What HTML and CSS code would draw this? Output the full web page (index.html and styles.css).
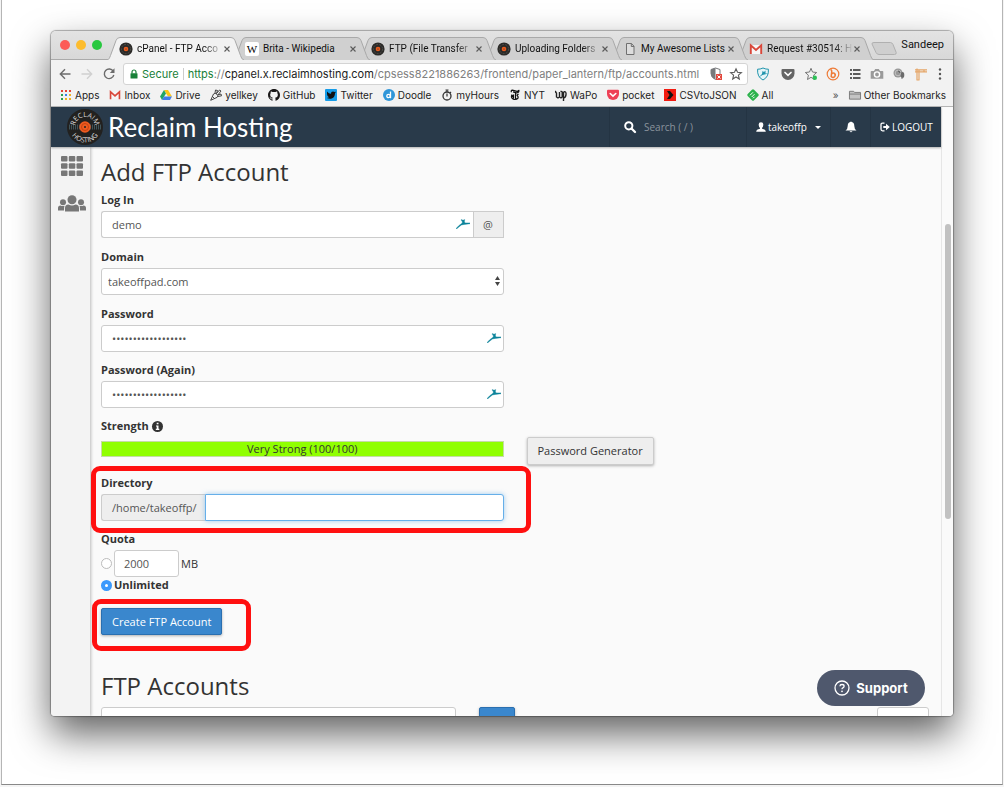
FILE: index.html
```html
<!DOCTYPE html>
<html lang="en">
<head>
<meta charset="utf-8">
<title>cPanel - FTP Accounts</title>
<link rel="stylesheet" href="styles.css">
</head>
<body>
<svg class="defs" aria-hidden="true">
  <symbol id="record" viewBox="0 0 14 14"><circle cx="7" cy="7" r="6.6" fill="#2b2a28"/><circle cx="7" cy="7" r="4.6" fill="none" stroke="#5c5a55" stroke-width=".7" stroke-dasharray="2 1.2"/><circle cx="7" cy="7" r="2.3" fill="#ea5b1d"/><circle cx="7" cy="7" r=".6" fill="#2b2a28"/></symbol>
  <symbol id="gmail" viewBox="0 0 14 14"><path d="M2 3h10v9H2z" fill="#f6f6f6"/><path d="M1.8 12V3.4L7 8l5.200-4.600V12" fill="none" stroke="#d9473a" stroke-width="1.900"/></symbol>
  <symbol id="close" viewBox="0 0 8 8"><path d="M1.500 1.500l5 5M6.500 1.500l-5 5" stroke="#5b5b5b" stroke-width="1.100"/></symbol>
  <symbol id="tab" viewBox="0 0 137 23" preserveAspectRatio="none"><path d="M0 23C2 22.500 2.500 21 3.500 18.500L9 3.500Q10 .5 13 .5H124Q127 .5 128 3.500l5.500 15Q134.500 22.500 137 23" stroke="#a9a9a9" stroke-width="1"/></symbol>
  <symbol id="impala" viewBox="0 0 14 10"><path d="M0 9.600 3 6.500 6 4.300 6.500 3 5.300 1.300 5.300.5 7 1.300 8.700.6 8.400 2.600 9 3.900H14V4.700L8.500 5.400 5.500 5.900 3.200 7.800.5 10z" fill="#0c849b" stroke="#0c849b" stroke-width=".4"/></symbol>
</svg>
<main class="frame">
<section class="browser">
  <header class="tabstrip">
    <div class="lights"><i class="red"></i><i class="yellow"></i><i class="green"></i></div>
    <nav class="tabs">
      <div class="tab active"><svg class="shape"><use href="#tab"/></svg><svg class="fav"><use href="#record"/></svg><span class="title">cPanel - FTP Acco</span><button class="close" aria-label="Close tab"><svg><use href="#close"/></svg></button></div>
      <div class="tab t2"><svg class="shape"><use href="#tab"/></svg><svg class="fav" viewBox="0 0 14 14"><rect width="14" height="14" rx="2" fill="#fff"/><text x="7" y="11" text-anchor="middle" class="wiki">W</text></svg><span class="title">Brita - Wikipedia</span><button class="close" aria-label="Close tab"><svg><use href="#close"/></svg></button></div>
      <div class="tab t3"><svg class="shape"><use href="#tab"/></svg><svg class="fav"><use href="#record"/></svg><span class="title">FTP (File Transfer</span><button class="close" aria-label="Close tab"><svg><use href="#close"/></svg></button></div>
      <div class="tab t4"><svg class="shape"><use href="#tab"/></svg><svg class="fav"><use href="#record"/></svg><span class="title">Uploading Folders</span><button class="close" aria-label="Close tab"><svg><use href="#close"/></svg></button></div>
      <div class="tab t5"><svg class="shape"><use href="#tab"/></svg><svg class="fav" viewBox="0 0 14 14"><path d="M3.500 1.500H8.500L11 4.200V12.500H3.500zM8.300 1.500V4.500H11" fill="#ddd" stroke="#707070"/></svg><span class="title">My Awesome Lists</span><button class="close" aria-label="Close tab"><svg><use href="#close"/></svg></button></div>
      <div class="tab t6"><svg class="shape"><use href="#tab"/></svg><svg class="fav"><use href="#gmail"/></svg><span class="title">Request #30514: H</span><button class="close" aria-label="Close tab"><svg><use href="#close"/></svg></button></div>
    </nav>
    <button class="newtab" aria-label="New tab"><svg viewBox="0 0 26 13"><path d="M3 .5H19.500Q21 .5 22 2.500L25.200 10.500Q25.500 12.500 23.500 12.500H8Q6 12.500 5 10.500L1 2Q.6.5 3 .5z" fill="#cfcfcf" stroke="#b0b0b0"/></svg></button>
    <span class="profile">Sandeep</span>
  </header>

  <div class="toolbar">
    <div class="navs">
      <button aria-label="Back"><svg viewBox="0 0 14 14"><path d="M12.500 7H2.500M7 2.300 2.300 7 7 11.700" fill="none" stroke="#6b6b6b" stroke-width="1.400"/></svg></button>
      <button aria-label="Forward"><svg viewBox="0 0 14 14"><path d="M1.500 7H11.500M7 2.300 11.700 7 7 11.700" fill="none" stroke="#d0d0d0" stroke-width="1.400"/></svg></button>
      <button aria-label="Reload"><svg viewBox="0 0 14 14"><path d="M11.200 4.200A4.800 4.800 0 1 0 11.800 8" fill="none" stroke="#6b6b6b" stroke-width="1.400"/><path d="M12.500 1.300V6H7.800z" fill="#6b6b6b"/></svg></button>
    </div>
    <div class="omnibox">
      <svg class="lock" viewBox="0 0 10 10"><path d="M3 4.500V3a2 2 0 0 1 4 0v1.500" fill="none" stroke="#188038" stroke-width="1.200"/><rect x="1.500" y="4.200" width="7" height="5.300" rx=".5" fill="#188038"/></svg>
      <span class="secure">Secure</span>
      <span class="url" role="textbox" aria-label="Address"><span class="scheme">https</span>://<span class="host">cpanel.x.reclaimhosting.com</span>/cpsess8221886263/frontend/paper_lantern/ftp/accounts.html</span>
      <svg class="oi" viewBox="0 0 14 14"><path d="M6.500 1 11 2.500V7Q10.500 10.500 6.500 12.500 2 10.500 2 6.500V2.500z" fill="#fff" stroke="#77797b"/><path d="M6.500 1V12.500Q2 10.500 2 6.500V2.500z" fill="#77797b"/><rect x="7" y="7" width="6" height="6" fill="#e2483d"/><path d="M8.500 8.500l3 3M11.500 8.500l-3 3" stroke="#fff"/></svg>
      <svg class="oi" viewBox="0 0 14 14"><path d="M7 1.800 8.500 5.300 12.400 5.700 9.400 8.200 10.300 12 7 10 3.700 12 4.600 8.200 1.600 5.700 5.500 5.300z" fill="none" stroke="#5c5c5c" stroke-width="1.100"/></svg>
    </div>
    <div class="exts">
      <svg class="w18" viewBox="0 0 14 14"><path d="M7 1Q4 2.400 1.600 2.200 1 10 7 13 13 10 12.400 2.200 10 2.400 7 1z" fill="#e5f5f8" stroke="#2094ac"/><path d="M2.500 10.500 6 7 6.500 4 8 5 9.500 3.500V6.500H12.500L6.500 8z" fill="#2094ac"/></svg>
      <svg class="w16" viewBox="0 0 14 14"><path d="M1.500 2H12.500Q13.500 2 13.500 3V6.500A6.500 6.500 0 0 1 .5 6.500V3Q.5 2 1.500 2z" fill="#656565"/><path d="M4 5.500 7 8.300 10 5.500" fill="none" stroke="#fff" stroke-width="1.700" stroke-linecap="round"/></svg>
      <svg viewBox="0 0 14 14"><path d="M7 1.300 8.500 5 12.700 5.500 9.600 8.200 10.500 12.500 7 10.300 3.500 12.500 4.400 8.200 1.300 5.500 5.500 5z" fill="none" stroke="#777"/><circle cx="10.800" cy="10.800" r="2.200" fill="#2cc157"/></svg>
      <svg viewBox="0 0 14 14"><circle cx="7" cy="7" r="5.800" fill="none" stroke="#ee7b37" stroke-width="1.200"/><path d="M4.500 2.800Q6 3 5.700 5L5.200 9.500Q7 11.400 8.700 9.500 10 7.500 8.300 6.300 6.500 5.500 5.500 7.200" fill="none" stroke="#ee7b37" stroke-width="1.500"/></svg>
      <svg viewBox="0 0 14 14"><path d="M2 3h2M2 7h2M2 11h2M5 3h7.500M5 7h7.500M5 11h7.500" stroke="#5c5c5c" stroke-width="1.800"/></svg>
      <svg viewBox="0 0 14 14"><path d="M1.500 4H4L5.200 2h3.600L10 4h2.500q.8 0 .8.800v7H.7v-7Q.7 4 1.500 4z" fill="#9a9a9a"/><circle cx="7" cy="7.500" r="2.600" fill="none" stroke="#fff" stroke-width="1.400"/></svg>
      <svg viewBox="0 0 14 14"><circle cx="6" cy="6" r="4.500" fill="#979797"/><circle cx="6" cy="6" r="2.800" fill="none" stroke="#ccc" stroke-width=".8"/><path d="M6 4a2 2 0 0 1 2 2" stroke="#555" fill="none"/><ellipse cx="10.500" cy="8" rx="1.800" ry="3" fill="#6b6b6b"/><path d="M10 10v2" stroke="#777"/></svg>
      <svg viewBox="0 0 14 14"><path d="M1 2.800H13M1 4.800H13M3 1.500V13M5 2.800V13M2.500 13H5.500M10 3V5.500" stroke="#e5a567" stroke-width="1.200"/></svg>
      <svg class="w8" viewBox="0 0 8 14"><g fill="#555"><circle cx="4" cy="2.500" r="1.200"/><circle cx="4" cy="7" r="1.200"/><circle cx="4" cy="11.500" r="1.200"/></g></svg>
    </div>
  </div>

  <nav class="bookmarks">
    <a href="#"><svg viewBox="0 0 12 12"><g fill="#e44437"><path d="M1 1h2v2H1zM5 1h2v2H5zM9 1h2v2H9z"/></g><path d="M1 5h2v2H1z" fill="#2e9e54"/><path d="M5 5h2v2H5z" fill="#3d7fe8"/><path d="M9 5h2v2H9zM5 9h2v2H5zM9 9h2v2H9z" fill="#eeb325"/><path d="M1 9h2v2H1z" fill="#2e9e54"/></svg>Apps</a>
    <a href="#"><svg><use href="#gmail"/></svg>Inbox</a>
    <a href="#"><svg viewBox="0 0 12 12"><path d="M4 1H8L12 7.500H8z" fill="#fbc617"/><path d="M4 1 0 7.500 2 11 6 4.500z" fill="#21a465"/><path d="M2 11H10L12 7.500H4z" fill="#427ee8"/></svg>Drive</a>
    <a href="#"><svg viewBox="0 0 12 12"><path d="M.7 11.300 3.500 5Q5 3.500 7 5.200 8.700 7 7.200 8.300zM2.500 7.500 4.500 9.500M5 4l.5-3 2 .5L6.500 4.500 9.500 1l1.500 1L8 5.800 11 5l.5 1.800L8 7.500" fill="none" stroke="#333" stroke-width=".9"/></svg>yellkey</a>
    <a href="#"><svg viewBox="0 0 16 16"><path fill="#191717" d="M8 0C3.580 0 0 3.580 0 8c0 3.540 2.290 6.530 5.470 7.590.4.070.55-.17.55-.38v-1.490c-2.230.48-2.700-.94-2.700-.94-.36-.92-.89-1.170-.89-1.170-.73-.5.060-.49.060-.49.800.060 1.230.83 1.230.83.720 1.230 1.870.87 2.330.67.070-.52.280-.87.500-1.070-1.770-.2-3.640-.89-3.640-3.950 0-.88.310-1.590.82-2.150-.08-.2-.36-1.020.08-2.120 0 0 .67-.22 2.200.82a7.600 7.600 0 0 1 4 0c1.530-1.040 2.200-.82 2.200-.82.440 1.100.16 1.920.08 2.120.51.560.82 1.270.82 2.150 0 3.070-1.870 3.750-3.650 3.950.29.250.54.730.54 1.480v2.200c0 .21.150.46.550.38A8 8 0 0 0 16 8c0-4.420-3.580-8-8-8z"/></svg>GitHub</a>
    <a href="#"><svg viewBox="0 0 12 12"><rect width="12" height="12" rx="1" fill="#169ce8"/><path d="M2 2.500Q4 5 6 4.800 5.800 2.500 8 2.500 9 2.500 9.500 3L11 2.800 10 4.300Q10 9 6 9.700 4 10 1.800 9L4 8.200 2.500 7 2 5z" fill="#111"/></svg>Twitter</a>
    <a href="#"><svg viewBox="0 0 12 12"><circle cx="6" cy="6" r="6" fill="#2f96d9"/><circle cx="5.500" cy="7" r="1.700" fill="none" stroke="#fff" stroke-width="1.300"/><path d="M7.500 2.500v6.700" stroke="#fff" stroke-width="1.300"/></svg>Doodle</a>
    <a href="#"><svg viewBox="0 0 12 12"><circle cx="6" cy="7" r="4" fill="none" stroke="#333" stroke-width="1.300"/><path d="M4.500 1h3M6 1v2M6 4.500V7.500M9 3l1 1" stroke="#333" stroke-width="1.200"/></svg>myHours</a>
    <a href="#"><svg viewBox="0 0 12 12"><path d="M2.500 3.200Q1.500 1.500 3.500 1.200L8 2.400Q9.500 2.400 9.800 1M9.800 1Q10.500 4 7.500 3.800L4 2.800M6.500 4v6M3 5.500Q1.500 8.500 4 10 7 11.500 9.500 8.500M9.500 5 8 6.200 9.500 8.500M4.500 5.500V8.500L3 6" fill="none" stroke="#111" stroke-width="1.200"/></svg>NYT</a>
    <a href="#"><svg viewBox="0 0 12 12"><path d="M1 2Q0 3 1.500 4V8L3 9 4.500 8V3M4.500 8 6 9 7.200 8V3L5.500 2M8.500 3V12M8.500 3Q11.500 2 11 5.500 11 8.500 8.500 9" fill="none" stroke="#222" stroke-width="1.400"/></svg>WaPo</a>
    <a href="#"><svg viewBox="0 0 12 12"><path d="M1 .8H11Q12 .8 12 2V5A6 6 0 0 1 0 5V2Q0 .8 1 .8z" fill="#ee4056"/><path d="M3.200 4.500 6 7.200 8.800 4.500" fill="none" stroke="#fff" stroke-width="1.600" stroke-linecap="round"/></svg>pocket</a>
    <a href="#"><svg viewBox="0 0 12 12"><rect width="12" height="12" fill="#f21b10"/><path d="M3 2h3l3.500 4L6 10H3l2.500-4z" fill="#111"/></svg>CSVtoJSON</a>
    <a href="#"><svg viewBox="0 0 12 12"><rect x="1.500" y="1.500" width="9" height="9" rx="1.500" transform="rotate(45 6 6)" fill="#2bb24c"/><path d="M3 6.300 6 3.300M4.700 8 7.500 5.200M6 9.300 7.500 7.800" stroke="#fff" stroke-width="1"/></svg>All</a>
    <span class="more">»</span>
    <a class="other" href="#"><svg viewBox="0 0 13 12"><path d="M.5 2H5L6 3.200H12.500V10.500H.5zM.5 5H12.500" fill="#c4c4c4" stroke="#777"/></svg>Other Bookmarks</a>
  </nav>

  <div class="viewport">
    <div class="page">
      <header class="topbar">
        <a class="brand" href="#">
          <svg viewBox="0 0 36 36"><defs><path id="arcTop" d="M8 18A10 10 0 0 1 28 18"/><path id="arcBottom" d="M2.500 18A15.500 15.500 0 0 0 33.500 18"/></defs><circle cx="18" cy="18" r="18" fill="#22211f"/><path d="M2 18H13M23 18H34" stroke="#3f5358" stroke-width="5" stroke-dasharray="1 1"/><circle cx="18" cy="18" r="5.700" fill="#ee5b20"/><circle cx="18" cy="18" r="3.500" fill="none" stroke="#c5410f"/><circle cx="18" cy="18" r="1" fill="#222"/><text class="ring"><textPath href="#arcTop" startOffset="50%" text-anchor="middle">RECLAIM</textPath></text><text class="ring"><textPath href="#arcBottom" startOffset="50%" text-anchor="middle">HOSTING</textPath></text></svg>
          <span>Reclaim Hosting</span>
        </a>
        <label class="search"><svg viewBox="0 0 12 12"><circle cx="4.800" cy="4.800" r="3.600" fill="none" stroke="#fff" stroke-width="2"/><path d="M7.500 7.500 11 11" stroke="#fff" stroke-width="2.300" stroke-linecap="round"/></svg><input type="text" placeholder="Search ( / )" aria-label="Search"></label>
        <button class="user"><svg viewBox="0 0 10 10"><path d="M5 .3Q7.500.3 7.300 3 7.200 5 6 6V6.800Q9.800 7.500 9.800 9.700H.2Q.2 7.500 4 6.800V6Q2.800 5 2.700 3 2.500.3 5 .3z" fill="#fff"/></svg>takeoffp<i class="caret"></i></button>
        <button class="bell" aria-label="Notifications"><svg viewBox="0 0 12 12"><path d="M5.200 1Q6 0 6.800 1 9.300 1.600 9.300 5 9.300 8 11.500 9.600H.5Q2.700 8 2.700 5 2.700 1.600 5.200 1zM4.500 10.200h3Q6 12.500 4.500 10.200z" fill="#fff"/></svg></button>
        <a class="logout" href="#"><svg viewBox="0 0 10 10"><path d="M4.500 1.200H2.500Q1 1.200 1 2.700V7.300Q1 8.800 2.500 8.800H4.500" fill="none" stroke="#fff" stroke-width="1.300"/><path d="M3.300 4H6V1.800L9.800 5 6 8.200V6H3.300z" fill="#fff"/></svg>LOGOUT</a>
      </header>
      <div class="columns">
        <aside class="sidebar">
          <svg class="grid" viewBox="0 0 22 20"><g fill="#777"><rect width="6.500" height="5.500" rx="1"/><rect x="7.800" width="6.500" height="5.500" rx="1"/><rect x="15.500" width="6.500" height="5.500" rx="1"/><rect y="7.200" width="6.500" height="5.500" rx="1"/><rect x="7.800" y="7.200" width="6.500" height="5.500" rx="1"/><rect x="15.500" y="7.200" width="6.500" height="5.500" rx="1"/><rect y="14.400" width="6.500" height="5.500" rx="1"/><rect x="7.800" y="14.400" width="6.500" height="5.500" rx="1"/><rect x="15.500" y="14.400" width="6.500" height="5.500" rx="1"/></g></svg>
          <svg class="people" viewBox="0 0 28 17"><g fill="#777"><circle cx="14" cy="4.800" r="4.500"/><circle cx="5" cy="7.300" r="3"/><circle cx="23" cy="7.300" r="3"/><path d="M7 16.500V13q0-3.500 3.500-3.500 3.500 1.800 7 0Q21 9.500 21 13v3.500zM0 15.500V13q0-2.500 2.500-2.500 2 1 4 .2Q6 12 6 15.500zM28 15.500V13q0-2.500-2.500-2.500-2 1-4 .2Q22 12 22 15.500z"/></g></svg>
        </aside>
        <div class="content">
          <h1>Add FTP Account</h1>
          <form class="form">
            <div class="group">
              <label for="login">Log In</label>
              <div class="joined"><div class="field"><input id="login" type="text" value="demo"><svg class="impala"><use href="#impala"/></svg></div><span class="addon at">@</span></div>
            </div>
            <div class="group">
              <label for="domain">Domain</label>
              <div class="field"><select id="domain"><option>takeoffpad.com</option></select><svg class="arrows" viewBox="0 0 5 10"><path d="M0 4 2.500 0 5 4zM0 6 2.500 10 5 6z" fill="#444"/></svg></div>
            </div>
            <div class="group tight">
              <label for="pw">Password</label>
              <div class="field"><input id="pw" type="password" value="abcdefghijklmnopqr"><svg class="impala"><use href="#impala"/></svg></div>
            </div>
            <div class="group tight">
              <label for="pw2">Password (Again)</label>
              <div class="field"><input id="pw2" type="password" value="abcdefghijklmnopqr"><svg class="impala"><use href="#impala"/></svg></div>
            </div>
            <div class="group">
              <span class="label">Strength <svg class="info" viewBox="0 0 11 11"><circle cx="5.500" cy="5.500" r="5.500" fill="#333"/><path d="M4.700 1.700h1.800v1.600H4.700zM4 4.500h2.500V7.800H7.300V9H3.800V7.800H4.700V5.600H4z" fill="#fff"/></svg></span>
              <div class="meterrow"><div class="meter">Very Strong (100/100)</div></div>
            </div>
            <div class="side"><button class="btn" type="button">Password Generator</button></div>
            <div class="group tight marked directory">
              <label for="dir">Directory</label>
              <div class="joined"><span class="addon home">/home/takeoffp/</span><input id="dir" class="focus" type="text"></div>
            </div>
            <div class="group quota">
              <span class="label">Quota</span>
              <div class="choice"><input type="radio" name="quota" aria-label="Limited quota"><input class="amount" type="text" value="2000" aria-label="Quota in megabytes"><span class="mb">MB</span></div>
              <div class="choice"><input type="radio" name="quota" id="unl" checked><label for="unl">Unlimited</label></div>
            </div>
            <div class="actions"><span class="marked create"><button class="btn primary" type="button">Create FTP Account</button></span></div>
          </form>
          <h2>FTP Accounts</h2>
          <div class="filter"><input type="text" aria-label="Search accounts"><button class="btn primary go" type="button" aria-label="Go"></button><select aria-label="Page size"><option></option></select></div>
        </div>
      </div>
    </div>
    <div class="scrolltrack"><div class="thumb"></div></div>
    <button class="support"><svg viewBox="0 0 16 16"><circle cx="8" cy="8" r="7" fill="none" stroke="#fff" stroke-width="1.300"/><path d="M5.900 6.300Q6 4.500 8 4.500 10.100 4.500 10.100 6.200 10.100 7.300 8.900 7.800 8 8.200 8 9.300" fill="none" stroke="#fff" stroke-width="1.300"/><circle cx="8" cy="11.300" r=".9" fill="#fff"/></svg>Support</button>
  </div>
</section>
</main>
</body>
</html>
```

FILE: styles.css
```css
* { box-sizing: border-box; }
body { margin: 0; height: 100vh; padding: 0 1px 2px; background: #f4f4f4; font: 11px/16px "Open Sans", "Noto Sans", sans-serif; color: #333; overflow: hidden; }
svg { display: block; flex: none; overflow: visible; }
.defs { position: absolute; width: 0; height: 0; overflow: hidden; }
a { color: inherit; text-decoration: none; }
button, input, select { font: inherit; color: inherit; margin: 0; }
button { padding: 0; border: 0; background: none; }

.frame { height: 100%; display: flex; padding: 31px 49px 68px; background: #fff; border: 1px solid #b5b5b5; border-top: 0; border-bottom-color: #888; overflow: hidden; }
.browser { flex: 1; min-width: 0; display: flex; flex-direction: column; border-radius: 5px 5px 4px 4px; background: #f2f2f2; box-shadow: 0 0 1px 1px rgba(0,0,0,.3), 0 18px 38px rgba(0,0,0,.62); font-family: Inter, Roboto, sans-serif; }

.tabstrip { display: flex; align-items: flex-end; height: 29px; background: linear-gradient(#e3e3e3, #d8d8d8); border-bottom: 1px solid #aaa; border-radius: 5px 5px 0 0; font-family: Roboto, sans-serif; font-size: 10px; color: #111; }
.lights { display: flex; gap: 6px; width: 56px; padding-left: 9px; align-self: center; }
.lights i { width: 10px; height: 10px; border-radius: 50%; }
.red { background: #fc5b57; }
.yellow { background: #fdbc2e; }
.green { background: #28c840; }
.tabs { display: flex; flex: 0 1 767px; min-width: 0; }
.tab { position: relative; display: flex; align-items: center; flex: 1 1 137px; min-width: 0; height: 23px; margin-bottom: -1px; margin-left: -11px; padding: 0 13px 0 12px; gap: 4px; }
.tab:first-child { margin-left: 0; }
.tab > * { position: relative; }
.tab .shape { position: absolute; left: 0; top: 0; width: 100%; height: 100%; fill: #d0d0d0; }
.tab.active .shape { fill: #f2f2f2; }
.active { z-index: 7; } .t2 { z-index: 6; } .t3 { z-index: 5; } .t4 { z-index: 4; } .t5 { z-index: 3; } .t6 { z-index: 2; }
.fav { width: 14px; height: 14px; }
.wiki { font: 11px "Liberation Serif", serif; }
.title { flex: 1; margin-right: -4px; white-space: nowrap; -webkit-mask-image: linear-gradient(90deg, #000 78%, transparent); mask-image: linear-gradient(90deg, #000 78%, transparent); }
.t2 .title, .t5 .title { -webkit-mask-image: none; mask-image: none; }
.close svg { width: 8px; height: 8px; }
.newtab { margin: 0 0 4px -3px; align-self: flex-end; }
.newtab svg { width: 26px; height: 13px; }
.profile { margin-left: auto; padding: 0 9px 0 0; align-self: center; font-size: 11px; }

.toolbar { display: flex; align-items: center; height: 28px; }
.navs { display: flex; gap: 8px; width: 72px; padding-left: 7px; }
.navs svg { width: 14px; height: 14px; }
.omnibox { display: flex; align-items: center; flex: 1; min-width: 0; height: 22px; padding: 0 4px 0 5px; background: #fff; border: 1px solid #d4d4d4; border-radius: 3px; font-size: 11px; }
.lock { width: 10px; height: 10px; margin-right: 3px; }
.secure { color: #188038; padding-right: 4px; border-right: 1px solid #ccc; line-height: 12px; margin-right: 4px; }
.url { flex: 1; min-width: 0; white-space: nowrap; color: #808080; }
.scheme { color: #188038; }
.host { color: #222; }
.oi { width: 14px; height: 14px; margin-left: 6px; }
.exts { display: flex; align-items: center; gap: 8px; padding: 0 9px 0 6px; }
.exts svg { width: 14px; height: 14px; }
.exts .w18 { width: 18px; }
.exts .w16 { width: 16px; }
.exts .w8 { width: 8px; }

.bookmarks { display: flex; align-items: center; gap: 10px; height: 19px; padding: 0 7px 4px 9px; border-bottom: 1px solid #b4b4b4; font-size: 10px; color: #222; white-space: nowrap; }
.bookmarks a { display: flex; align-items: center; gap: 3px; }
.bookmarks svg { width: 12px; height: 12px; }
.more { margin-left: auto; color: #555; }

.viewport { position: relative; flex: 1; min-height: 0; display: flex; overflow: hidden; border-radius: 0 0 4px 4px; background: #fafafa; font-family: "Open Sans", "Noto Sans", sans-serif; }
.page { flex: 1; min-width: 0; display: flex; flex-direction: column; }
.scrolltrack { width: 12px; padding: 117px 2px 0 3px; border-left: 1px solid #e6e6e6; }
.thumb { height: 60%; border-radius: 4px; background: #c1c1c1; }

.topbar { position: relative; flex: none; display: flex; height: 40px; background: #293a4a; color: #fff; box-shadow: 0 1px 2px rgba(0,0,0,.3); font-size: 10px; }
.brand { flex: 1; display: flex; align-items: center; gap: 5px; padding-left: 16px; font: 26px/36px Lato, sans-serif; white-space: nowrap; }
.brand svg { width: 36px; height: 36px; }
.ring { font: 7px "Open Sans", sans-serif; fill: #ddd; }
.search, .user, .bell, .logout { display: flex; align-items: center; border-left: 1px solid #243443; }
.search { width: 137px; padding-left: 14px; gap: 8px; }
.search svg { width: 12px; height: 12px; }
.search input { width: 80px; padding: 0; border: 0; background: none; outline: 0; }
.search input::placeholder { color: #8b949d; opacity: 1; }
.user { width: 84px; padding-left: 9px; gap: 2px; }
.user svg, .logout svg { width: 10px; height: 10px; }
.caret { margin-left: 6px; border: 3px solid transparent; border-top-color: #fff; border-bottom: 0; }
.bell { width: 40px; justify-content: center; }
.bell svg { width: 12px; height: 12px; }
.logout { width: 71px; padding-left: 9px; gap: 2px; }

.columns { flex: 1; min-height: 0; display: flex; }
.sidebar { width: 39px; display: flex; flex-direction: column; align-items: center; gap: 19px; padding: 9px 0 0 3px; background: #f3f3f3; box-shadow: 1px 0 3px rgba(0,0,0,.25); }
.grid { width: 22px; height: 20px; }
.people { width: 28px; height: 17px; }
.content { flex: 1; min-width: 0; padding: 9px 12px 0 11px; }
h1, h2 { margin: 0; font-size: 24px; line-height: 32px; font-weight: 400; }
h1 { margin-bottom: 4px; }
.form { display: grid; grid-template-columns: 1fr 1fr; column-gap: 23px; }
.group { grid-column: 1; margin-bottom: 11px; }
.group.tight { margin-bottom: 10px; }
.group label, .label { display: flex; align-items: center; gap: 3px; font-weight: 700; line-height: 16px; }
.field, .joined, .meterrow { margin-top: 3px; }
.joined { display: flex; }
.joined .field { flex: 1; margin-top: 0; }
.field { position: relative; }
.content input[type=text], .content input[type=password], .content select { display: block; width: 100%; height: 27px; padding: 0 10px; border: 1px solid #ccc; border-radius: 3px; background: #fff; color: #555; outline: 0; appearance: none; }
.content select { padding: 0 6px; }
.content .joined .field input { border-radius: 3px 0 0 3px; border-right: 0; }
.content .joined .focus { flex: 1; width: auto; min-width: 0; border-color: #66afe9; border-radius: 0 3px 3px 0; box-shadow: 0 0 5px rgba(102,175,233,.6); }
.impala { position: absolute; right: 3px; top: 8px; width: 14px; height: 10px; }
.arrows { position: absolute; right: 4px; top: 8px; width: 5px; height: 10px; }
.addon { display: flex; align-items: center; padding: 0 10px; border: 1px solid #ccc; background: #eee; color: #555; }
.at { width: 31px; padding: 0; justify-content: center; }
.home { border-right: 0; border-radius: 3px 0 0 3px; width: 104px; }
.info { width: 11px; height: 11px; }
.meterrow { height: 27px; padding-top: 4px; }
.meter { height: 16px; border: 1px solid #c5dba5; background: #90ff00; line-height: 14px; text-align: center; }
.side { grid-column: 2; align-self: end; margin-bottom: 10px; }
.btn { height: 28px; padding: 0 10px; border: 1px solid #ccc; border-radius: 2px; background: #eee; box-shadow: 0 1px 3px rgba(0,0,0,.3); }
.primary { height: 27px; border-color: #2a6fb0; background: #3a87cd; color: #fff; }
.marked { position: relative; }
.marked::after { content: ""; position: absolute; border: 5px solid #ff1010; border-radius: 9px; pointer-events: none; }
.directory::after { left: -10px; right: -27px; top: -9px; bottom: -12px; }
.create::after { left: -9px; right: -29px; top: -9px; bottom: -16px; }
.create { display: inline-block; }
.quota { margin-bottom: 15px; }
.choice { display: flex; align-items: center; gap: 2px; }
.quota .label + .choice { margin-top: 3px; }
input[type=radio] { appearance: none; width: 11px; height: 11px; border: 1px solid #bbb; border-radius: 50%; background: #fff; }
input[type=radio]:checked { border: 4px solid #3b99fc; }
.content .choice .amount { width: 65px; padding: 0 9px; }
.actions { grid-column: 1; height: 27px; display: flex; }
h2 { margin: 35px 0 5px; }
.filter { display: flex; }
.content .filter input { flex: 0 1 355px; }
.go { width: 36px; margin-left: 23px; }
.content .filter select { width: 52px; margin-left: auto; }

.support { position: absolute; right: 28px; bottom: 10px; display: flex; align-items: center; justify-content: center; gap: 6px; width: 108px; height: 36px; border-radius: 18px; background: #4f586d; color: #fff; font: 700 13px/16px Inter, sans-serif; }
.support svg { width: 16px; height: 16px; }
```
